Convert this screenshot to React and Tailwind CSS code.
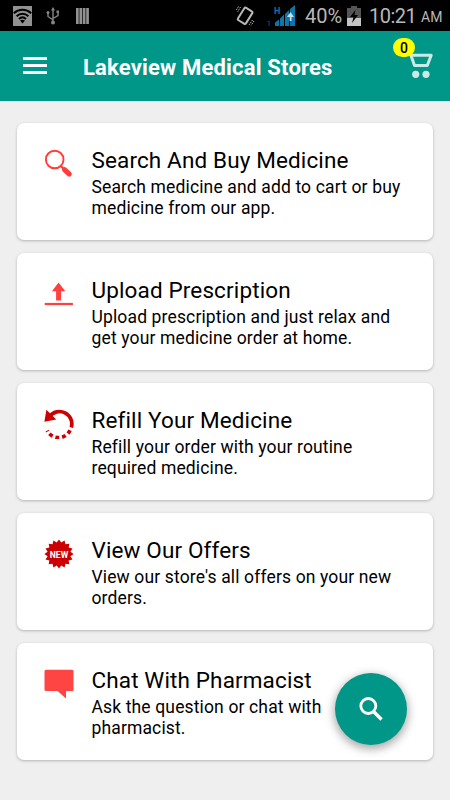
const cards = [
  {
    title: 'Search And Buy Medicine',
    lines: ['Search medicine and add to cart or buy', 'medicine from our app.'],
    Icon: SearchIcon,
  },
  {
    title: 'Upload Prescription',
    lines: ['Upload prescription and just relax and', 'get your medicine order at home.'],
    Icon: UploadIcon,
  },
  {
    title: 'Refill Your Medicine',
    lines: ['Refill your order with your routine', 'required medicine.'],
    Icon: RefillIcon,
  },
  {
    title: 'View Our Offers',
    lines: ["View our store's all offers on your new", 'orders.'],
    Icon: OffersIcon,
  },
  {
    title: 'Chat With Pharmacist',
    lines: ['Ask the question or chat with', 'pharmacist.'],
    Icon: ChatIcon,
  },
];

function SearchIcon() {
  return (
    <svg width="30" height="30" viewBox="0 0 30 30" fill="none" stroke="#ff3b3b">
      <circle cx="10.7" cy="10.5" r="8.8" strokeWidth="1.9" />
      <path d="M16.8 17l3 3" strokeWidth="2.2" />
      <path d="M20.5 20.6l4.8 4.5" strokeWidth="5" strokeLinecap="round" />
    </svg>
  );
}

function UploadIcon() {
  return (
    <svg width="30" height="30" viewBox="0 0 30 30" fill="#ff4040">
      <path d="M14.6 3.4l6.7 8.8h-4.2v9.3h-5v-9.3H7.9z" />
      <path d="M.7 23.9h28.2v2.2H.7z" />
    </svg>
  );
}

function RefillIcon() {
  return (
    <svg width="30" height="30" viewBox="0 0 30 30" fill="none" stroke="#cc0000" strokeWidth="3.7">
      <path d="M5.5 7.5A12.4 12.4 0 0 1 27.3 18.5" />
      <path d="M26.2 20.8A12.6 12.6 0 0 1 3.2 21.6" strokeDasharray="3.9 2.9" strokeDashoffset="-.5" />
      <path d="M2.4.8L.4 12.8l11.8-2.2z" fill="#cc0000" stroke="none" />
    </svg>
  );
}

function OffersIcon() {
  // sixteen pointed burst
  const points = Array.from({ length: 32 }, (_, i) => {
    const r = i % 2 ? 11.6 : 14.6;
    const a = (i * Math.PI) / 16;
    return `${(15 + r * Math.sin(a)).toFixed(2)},${(15 - r * Math.cos(a)).toFixed(2)}`;
  }).join(' ');
  return (
    <svg width="30" height="30" viewBox="0 0 30 30">
      <polygon points={points} fill="#cc0000" />
      <text x="15" y="18.5" textAnchor="middle" fontSize="9.8" fontWeight="700" fill="#fff" textLength="18.5" lengthAdjust="spacingAndGlyphs">
        NEW
      </text>
    </svg>
  );
}

function ChatIcon() {
  return (
    <svg width="30" height="30" viewBox="0 0 30 30" fill="#ff4444">
      <path d="M2 .7h26a1.5 1.5 0 0 1 1.5 1.5v18.3a1.5 1.5 0 0 1-1.5 1.5h-6v7.4L13.6 22H2A1.5 1.5 0 0 1 .5 20.5V2.2A1.5 1.5 0 0 1 2 .7z" />
    </svg>
  );
}

function StatusBar() {
  return (
    <div className="flex h-[31px] shrink-0 items-center bg-black text-[#b8b8b8]">
      <svg className="ml-[13px]" width="19" height="20" viewBox="0 0 19 20">
        <path d="M0 0h19v20H0z" fill="#929292" />
        <g fill="none" stroke="#000" strokeWidth="2">
          <path d="M.8 7.2c5-4.6 12.4-4.6 17.4 0" />
          <path d="M3.6 10.2c3.5-3.2 8.3-3.2 11.8 0" />
          <path d="M6 13c2.2-2 4.8-2 7 0" />
        </g>
        <path d="M7 14.6c1.6-1.2 3.4-1.2 5 0L9.5 17.5z" />
      </svg>
      <svg className="ml-[14px]" width="14" height="18" viewBox="0 0 14 18" fill="none" stroke="#858585" strokeWidth="1.4">
        <path d="M7 3v12M7 13L2 9.5V6M7 11.5l5-3V5" />
        <path d="M7 0l2 3.5H5zM10.5 3.5h2.5v2.5h-2.5z" fill="#858585" stroke="none" />
        <circle cx="2" cy="5.5" r="1.5" fill="#858585" stroke="none" />
        <circle cx="7" cy="15.5" r="2" fill="#858585" stroke="none" />
      </svg>
      <svg className="ml-4" width="13" height="16" viewBox="0 0 13 16" fill="#929292">
        <path d="M0 0h2.7v16H0zM3.4 0h2.7v16H3.4zM6.8 0h2.7v16H6.8zM10.2 0h2.7v16h-2.7z" />
      </svg>

      <svg className="ml-auto" width="20" height="22" viewBox="0 0 20 22" fill="none" stroke="#b8b8b8">
        <rect x="5.3" y="3.5" width="9.4" height="14.5" rx="1.5" strokeWidth="2" transform="rotate(32 10 11)" />
        <path d="M5.5 2L2.5 7M3.5 1.5L1 5.5M17.5 15l-3.5 5M19 16l-3 4.5" strokeDasharray="1.5 1" />
      </svg>
      <svg className="ml-3" width="29" height="22" viewBox="0 0 29 22" fill="#0c75aa">
        <text x="7" y="9" fontSize="9" fontWeight="700">H</text>
        <text x="0" y="21" fontSize="7">1</text>
        <path d="M8 17.5l4-3V21H8zM13 13.5l4-4V21h-4zM18 9l4-4v16h-4zM23 4l5-4v21h-5z" />
        <path d="M23.5 7l-3.5 5h2.5v4h2v-4H27z" fill="#c8dce6" />
      </svg>
      <span className="ml-[9px] w-[37px] whitespace-nowrap pt-px text-[20px]">40%</span>
      <svg className="ml-[5px]" width="14" height="20" viewBox="0 0 14 20">
        <path d="M4 0h6v2h4v18H0V2h4z" fill="#555" />
        <path d="M0 12h14v8H0z" fill="#c4c4c4" />
        <path d="M8.5 4L3 11h3.5L5 17l6-8H7.5z" fill="#000" />
      </svg>
      <span className="ml-2 w-[48px] whitespace-nowrap pt-px text-[20px] tracking-[-0.5px]">10:21</span>
      <span className="ml-1 mr-[7px] w-[22px] pt-[3px] text-[14px]">AM</span>
    </div>
  );
}

function Header() {
  return (
    <header className="flex h-[70px] shrink-0 items-center bg-[#009688] pl-[23px] pr-[17px]">
      <div className="flex w-6 flex-col gap-1 pb-px">
        <span className="h-[3px] bg-white" />
        <span className="h-[3px] bg-white" />
        <span className="h-[3px] bg-white" />
      </div>
      <h1 className="ml-9 whitespace-nowrap pt-[3px] text-[22px] font-bold tracking-[0.18px] text-white">
        Lakeview Medical Stores
      </h1>
      <div className="relative ml-auto">
        <svg width="24" height="26" viewBox="0 0 24 26">
          <path d="M1.9 2.2h20.3l-3.9 10.3H5.5z" fill="none" stroke="#c9eae6" strokeWidth="3" strokeLinejoin="round" />
          <circle cx="6.7" cy="21.3" r="3.6" fill="#c9eae6" />
          <circle cx="17" cy="21.3" r="3.6" fill="#c9eae6" />
        </svg>
        <span className="absolute -left-4 -top-[15px] flex h-[19px] w-[22px] items-center justify-center rounded-full bg-[#ffff00] pt-px text-[14px] font-medium text-black">
          0
        </span>
      </div>
    </header>
  );
}

export default function App() {
  return (
    <div className="relative flex h-[800px] w-[450px] flex-col overflow-hidden bg-[#efefef] font-[Roboto,sans-serif]">
      <StatusBar />
      <Header />
      <main className="flex flex-col gap-[13px] px-[17px] pt-[22px]">
        {cards.map(({ title, lines, Icon }) => (
          <section key={title} className="flex h-[117px] rounded-[7px] bg-white pl-[27px] pt-[26px] shadow-[0_1px_3px_rgba(0,0,0,0.25)]">
            <Icon />
            <div className="ml-[17.5px] whitespace-nowrap text-black">
              <h2 className="-mt-[3px] text-[22.5px] leading-[28px] tracking-[0.13px]">{title}</h2>
              <p className="mt-[3px] text-[17.5px] leading-[21px] tracking-[0.14px]">
                {lines[0]}
                <br />
                {lines[1]}
              </p>
            </div>
          </section>
        ))}
      </main>

      {/* Floating search */}
      <button className="absolute bottom-[55px] right-[43px] flex size-[72px] items-center justify-center rounded-full bg-[#009688] shadow-[0_3px_10px_1px_rgba(0,0,0,0.35)]">
        <svg width="24" height="24" viewBox="0 0 24 24" fill="none" stroke="#fff">
          <circle cx="9.3" cy="9" r="7.5" strokeWidth="2.8" />
          <path d="M14.5 14.5l8 8" strokeWidth="3.4" />
        </svg>
      </button>
    </div>
  );
}
